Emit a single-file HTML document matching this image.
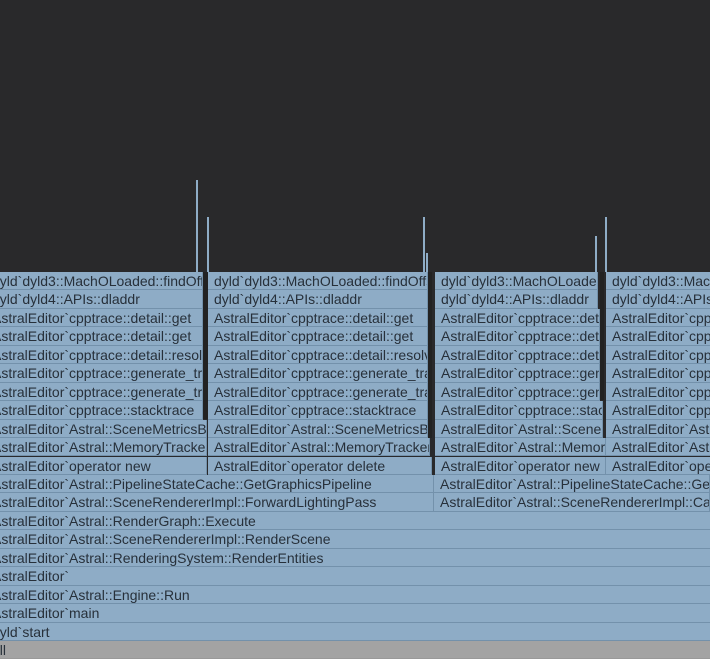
<!DOCTYPE html>
<html><head><meta charset="utf-8"><style>
body{margin:0;width:710px;height:656px;background:#29292b;position:relative;overflow:hidden}
.b{position:absolute;height:18.45px;box-sizing:border-box;border-bottom:1px solid #7391ab;border-right:1px solid #7391ab;background:#8eacc6;overflow:hidden;white-space:nowrap;font:14px "Liberation Sans",sans-serif;line-height:18px;color:#27303a;padding-left:6px}
.s{position:absolute;background:#8eacc6;width:2px}
.d{position:absolute;background:#222;width:4px}
</style></head><body>
<div class="s" style="left:196px;top:180px;height:92px"></div>
<div class="s" style="left:207px;top:217px;height:55px"></div>
<div class="s" style="left:423px;top:217px;height:55px"></div>
<div class="s" style="left:426px;top:253px;height:19px"></div>
<div class="s" style="left:595px;top:236px;height:36px"></div>
<div class="s" style="left:605px;top:217px;height:55px"></div>

<!-- col1 -->
<div class="b" style="left:-14px;width:217px;top:272px">dyld`dyld3::MachOLoaded::findOffset</div>
<div class="b" style="left:-14px;width:217px;top:290.45px">dyld`dyld4::APIs::dladdr</div>
<div class="b" style="left:-14px;width:217px;top:308.9px">AstralEditor`cpptrace::detail::get</div>
<div class="b" style="left:-14px;width:217px;top:327.35px">AstralEditor`cpptrace::detail::get</div>
<div class="b" style="left:-14px;width:217px;top:345.8px">AstralEditor`cpptrace::detail::resolve</div>
<div class="b" style="left:-14px;width:217px;top:364.25px">AstralEditor`cpptrace::generate_trace</div>
<div class="b" style="left:-14px;width:217px;top:382.7px">AstralEditor`cpptrace::generate_trace</div>
<div class="b" style="left:-14px;width:217px;top:401.15px">AstralEditor`cpptrace::stacktrace</div>
<div class="b" style="left:-14px;width:221px;top:419.6px">AstralEditor`Astral::SceneMetricsBuilder</div>
<div class="b" style="left:-14px;width:221px;top:438.05px">AstralEditor`Astral::MemoryTracker</div>
<div class="b" style="left:-14px;width:221px;top:456.5px">AstralEditor`operator new</div>
<div class="b" style="left:-14px;width:448px;top:474.95px">AstralEditor`Astral::PipelineStateCache::GetGraphicsPipeline</div>
<div class="b" style="left:-14px;width:448px;top:493.4px">AstralEditor`Astral::SceneRendererImpl::ForwardLightingPass</div>
<div class="b" style="left:-14px;width:730px;top:511.85px">AstralEditor`Astral::RenderGraph::Execute</div>
<div class="b" style="left:-14px;width:730px;top:530.3px">AstralEditor`Astral::SceneRendererImpl::RenderScene</div>
<div class="b" style="left:-14px;width:730px;top:548.75px">AstralEditor`Astral::RenderingSystem::RenderEntities</div>
<div class="b" style="left:-14px;width:730px;top:567.2px">AstralEditor`</div>
<div class="b" style="left:-14px;width:730px;top:585.65px">AstralEditor`Astral::Engine::Run</div>
<div class="b" style="left:-14px;width:730px;top:604.1px">AstralEditor`main</div>
<div class="b" style="left:-14px;width:730px;top:622.55px">dyld`start</div>
<div class="b" style="left:-14px;width:730px;top:641px;background:#a3a3a3;border-color:#999">all</div>

<!-- col2 -->
<div class="b" style="left:208px;width:220px;top:272px">dyld`dyld3::MachOLoaded::findOffset</div>
<div class="b" style="left:208px;width:220px;top:290.45px">dyld`dyld4::APIs::dladdr</div>
<div class="b" style="left:208px;width:220px;top:308.9px">AstralEditor`cpptrace::detail::get</div>
<div class="b" style="left:208px;width:220px;top:327.35px">AstralEditor`cpptrace::detail::get</div>
<div class="b" style="left:208px;width:220px;top:345.8px">AstralEditor`cpptrace::detail::resolve</div>
<div class="b" style="left:208px;width:220px;top:364.25px">AstralEditor`cpptrace::generate_trace</div>
<div class="b" style="left:208px;width:220px;top:382.7px">AstralEditor`cpptrace::generate_trace</div>
<div class="b" style="left:208px;width:220px;top:401.15px">AstralEditor`cpptrace::stacktrace</div>
<div class="b" style="left:208px;width:220px;top:419.6px">AstralEditor`Astral::SceneMetricsBuilder</div>
<div class="b" style="left:208px;width:222px;top:438.05px">AstralEditor`Astral::MemoryTracker</div>
<div class="b" style="left:208px;width:224px;top:456.5px">AstralEditor`operator delete</div>
<div class="d" style="left:428px;top:272px;height:166px"></div>
<div class="d" style="left:203px;top:272px;height:147px;width:5px"></div>

<!-- col3 -->
<div class="b" style="left:435px;width:163px;top:272px">dyld`dyld3::MachOLoaded::findOffset</div>
<div class="b" style="left:435px;width:163px;top:290.45px">dyld`dyld4::APIs::dladdr</div>
<div class="b" style="left:435px;width:165px;top:308.9px">AstralEditor`cpptrace::detail::get</div>
<div class="b" style="left:435px;width:165px;top:327.35px">AstralEditor`cpptrace::detail::get</div>
<div class="b" style="left:435px;width:165px;top:345.8px">AstralEditor`cpptrace::detail::resolve</div>
<div class="b" style="left:435px;width:165px;top:364.25px">AstralEditor`cpptrace::generate_trace</div>
<div class="b" style="left:435px;width:165px;top:382.7px">AstralEditor`cpptrace::generate_trace</div>
<div class="b" style="left:435px;width:168px;top:401.15px">AstralEditor`cpptrace::stacktrace</div>
<div class="b" style="left:435px;width:168px;top:419.6px">AstralEditor`Astral::SceneMetricsBuilder</div>
<div class="b" style="left:435px;width:171px;top:438.05px">AstralEditor`Astral::MemoryTracker</div>
<div class="b" style="left:435px;width:171px;top:456.5px">AstralEditor`operator new</div>
<div class="b" style="left:434px;width:276px;top:474.95px">AstralEditor`Astral::PipelineStateCache::GetGraphicsPipeline</div>
<div class="b" style="left:434px;width:276px;top:493.4px">AstralEditor`Astral::SceneRendererImpl::CameraPass</div>
<div class="d" style="left:600px;top:272px;height:128px;width:4px"></div>

<!-- col4 -->
<div class="b" style="left:606px;width:110px;top:272px">dyld`dyld3::MachOLoaded</div>
<div class="b" style="left:606px;width:110px;top:290.45px">dyld`dyld4::APIs::dladdr</div>
<div class="b" style="left:606px;width:110px;top:308.9px">AstralEditor`cpptrace</div>
<div class="b" style="left:606px;width:110px;top:327.35px">AstralEditor`cpptrace</div>
<div class="b" style="left:606px;width:110px;top:345.8px">AstralEditor`cpptrace</div>
<div class="b" style="left:606px;width:110px;top:364.25px">AstralEditor`cpptrace</div>
<div class="b" style="left:606px;width:110px;top:382.7px">AstralEditor`cpptrace</div>
<div class="b" style="left:606px;width:110px;top:401.15px">AstralEditor`cpptrace</div>
<div class="b" style="left:606px;width:110px;top:419.6px">AstralEditor`Astral</div>
<div class="b" style="left:606px;width:110px;top:438.05px">AstralEditor`Astral</div>
<div class="b" style="left:606px;width:110px;top:456.5px">AstralEditor`operator</div>
</body></html>
